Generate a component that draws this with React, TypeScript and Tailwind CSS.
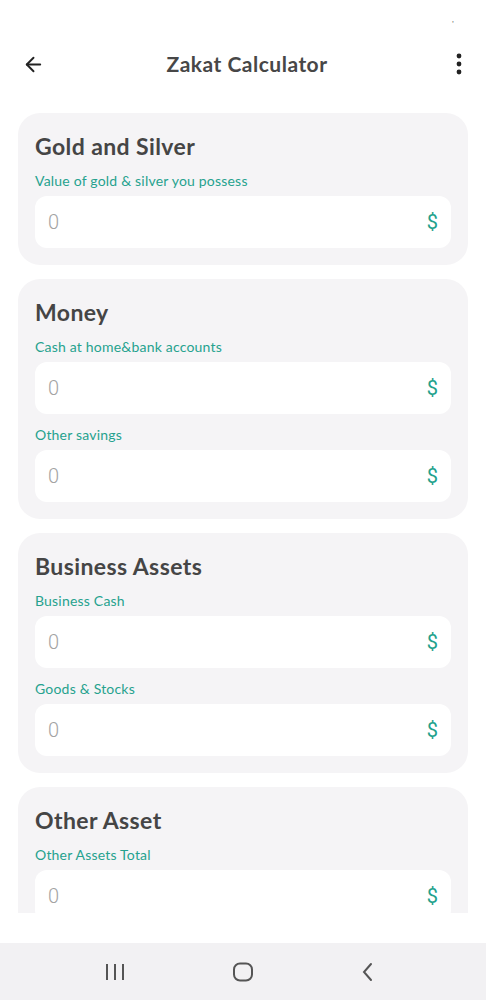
import React from 'react';
import { ArrowLeft } from 'lucide-react';

interface Field {
  label: string;
}

interface Section {
  title: string;
  fields: Field[];
}

const sections: Section[] = [
  { title: 'Gold and Silver', fields: [{ label: 'Value of gold & silver you possess' }] },
  { title: 'Money', fields: [{ label: 'Cash at home&bank accounts' }, { label: 'Other savings' }] },
  { title: 'Business Assets', fields: [{ label: 'Business Cash' }, { label: 'Goods & Stocks' }] },
  { title: 'Other Asset', fields: [{ label: 'Other Assets Total' }] },
];

function AmountInput() {
  return (
    <div className="mt-[6px] h-[52px] rounded-[12px] bg-white flex items-center justify-between pl-[13px] pr-[13px]">
      <span className="text-[20px] text-[#a3a3a3] font-['Roboto',sans-serif] font-light">0</span>
      <span className="text-[20px] text-[#22a18c] font-['Roboto',sans-serif]">$</span>
    </div>
  );
}

function SectionCard({ section }: { section: Section }) {
  return (
    <div className="shrink-0 rounded-[22px] bg-[#f5f4f6] px-[17px] pt-[20px] pb-[17px]">
      <h2 className="text-[23px] leading-[26px] font-bold text-[#454545] tracking-[0.4px]">{section.title}</h2>
      {section.fields.map((f, i) => (
        <div key={i}>
          <p className={`${i === 0 ? 'mt-[13px]' : 'mt-[12px]'} text-[14px] leading-[18px] text-[#26a28e] tracking-[0.2px]`}>{f.label}</p>
          <AmountInput />
        </div>
      ))}
    </div>
  );
}

export default function App() {
  return (
    <div className="h-[1000px] w-full flex flex-col bg-white font-['Lato',sans-serif] overflow-hidden">
      {/* Status bar */}
      <div className="h-[40px] relative shrink-0">
        <span className="absolute left-[452px] top-[13px] text-[8px] text-[#666]">,</span>
      </div>

      {/* Header */}
      <div className="h-[48px] shrink-0 flex items-center justify-between pl-[22px] pr-[23px]">
        <ArrowLeft className="w-[23px] h-[23px] text-[#222]" strokeWidth={2} />
        <h1 className="text-[21px] font-bold text-[#474747] tracking-[0.5px] ml-[-6px]">Zakat Calculator</h1>
        <svg width="8" height="22" viewBox="0 0 8 22">
          <circle cx="4" cy="3" r="2.4" fill="#222" />
          <circle cx="4" cy="11" r="2.4" fill="#222" />
          <circle cx="4" cy="19" r="2.4" fill="#222" />
        </svg>
      </div>

      {/* Content */}
      <div className="h-[825px] shrink-0 overflow-hidden px-[18px] pt-[25px] flex flex-col gap-[14px]">
        {sections.map((s, i) => (
          <SectionCard key={i} section={s} />
        ))}
      </div>

      <div className="h-[30px] shrink-0" />

      {/* Navigation bar */}
      <div className="h-[57px] shrink-0 bg-[#f2f1f3] flex items-center justify-between pl-[104px] pr-[110px]">
        <svg width="22" height="18" viewBox="0 0 22 18">
          <rect x="2" y="1" width="2" height="16" fill="#555" />
          <rect x="10" y="1" width="2" height="16" fill="#555" />
          <rect x="18" y="1" width="2" height="16" fill="#555" />
        </svg>
        <svg width="22" height="20" viewBox="0 0 22 20">
          <rect x="2" y="1.5" width="18" height="17" rx="6" fill="none" stroke="#555" strokeWidth="2" />
        </svg>
        <svg width="16" height="20" viewBox="0 0 16 20">
          <path d="M11 2 L4 10 L11 18" fill="none" stroke="#555" strokeWidth="2" strokeLinecap="round" />
        </svg>
      </div>
    </div>
  );
}
